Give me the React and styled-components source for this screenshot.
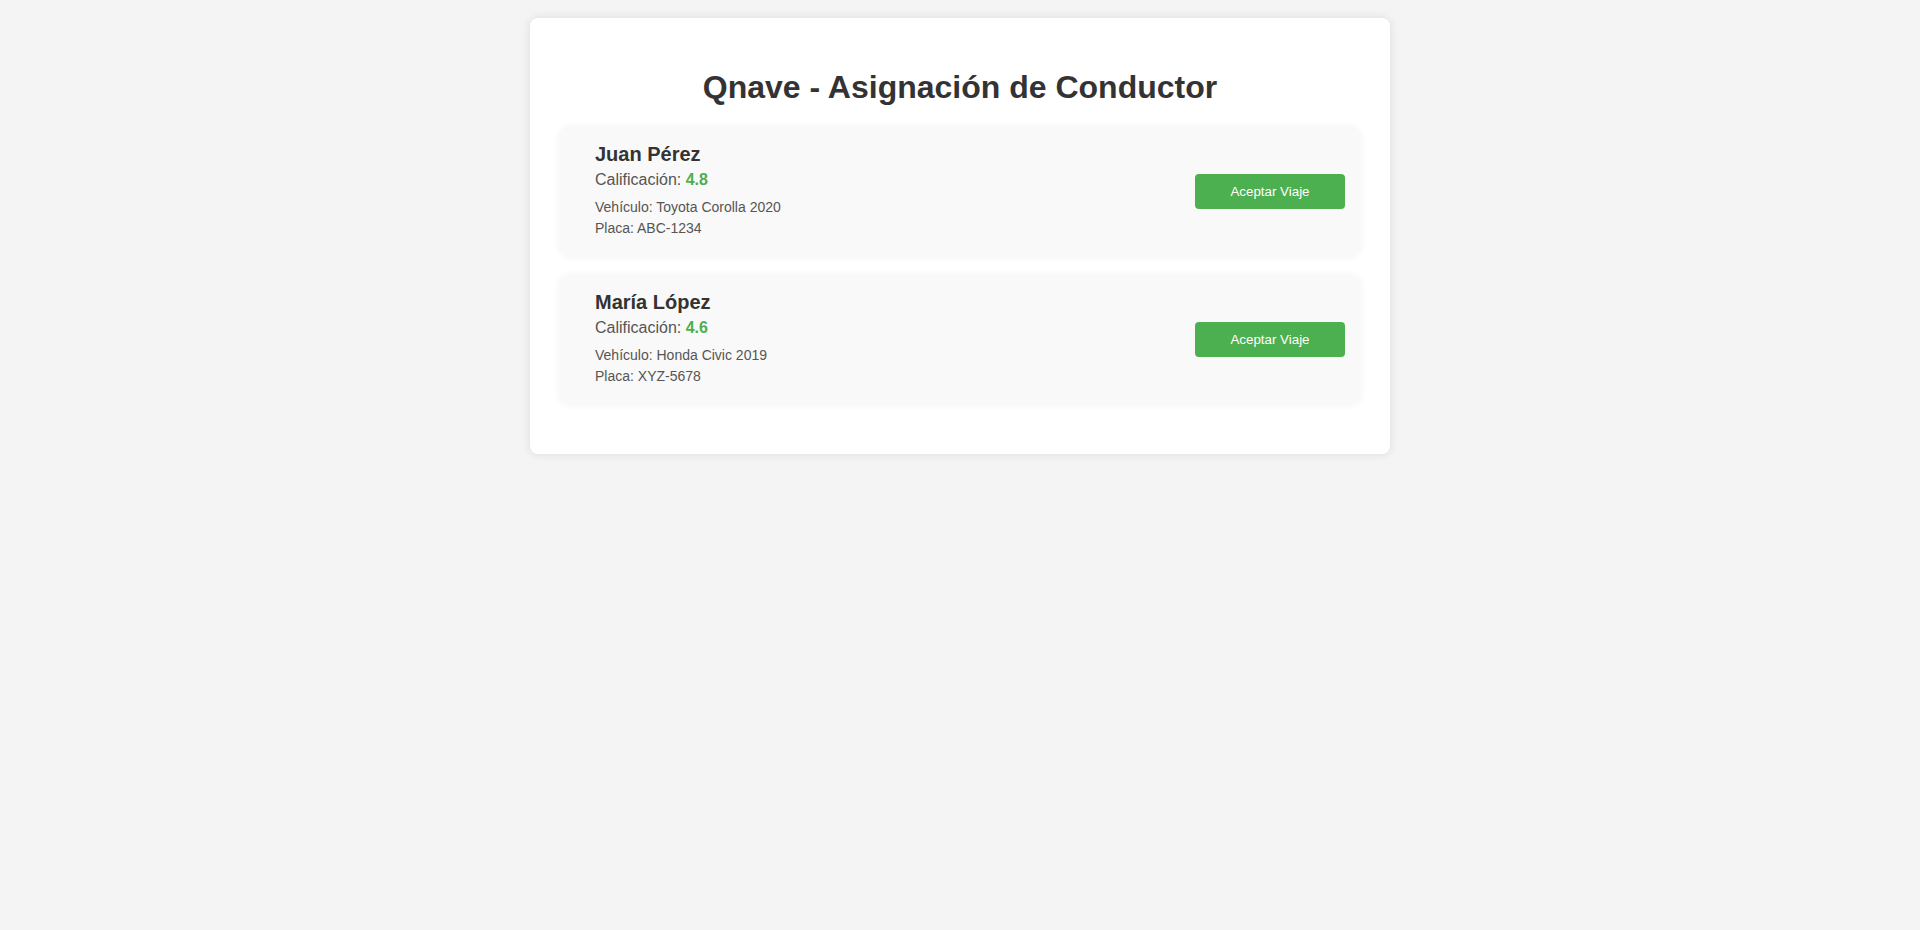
import React from 'react';
import styled, { createGlobalStyle } from 'styled-components';

const GlobalStyle = createGlobalStyle`
  body {
    margin: 0;
    padding: 18px 0;
    background: #f4f4f4;
    font-family: "Liberation Sans", Arial, sans-serif;
  }
`;

const Container = styled.div`
  max-width: 800px;
  margin: 0 auto;
  padding: 30px;
  background: #fff;
  border-radius: 8px;
  box-shadow: 0 0 10px rgba(0, 0, 0, 0.1);
`;

const Title = styled.h1`
  margin: 0.67em 0;
  font-size: 32px;
  text-align: center;
  color: #333;
`;

const Card = styled.div`
  display: flex;
  justify-content: space-between;
  align-items: center;
  margin-bottom: 20px;
  padding: 15px;
  background: #f9f9f9;
  border-radius: 8px;
  box-shadow: 0 0 8px rgba(0, 0, 0, 0.06);
`;

const Info = styled.div`
  margin-left: 20px;
`;

const Name = styled.h3`
  margin: 0 0 5px;
  font-size: 20px;
  color: #333;
`;

const Rating = styled.p`
  margin: 0 0 10px;
  font-size: 16px;
  color: #555;

  strong {
    color: #4caf50;
  }
`;

const Detail = styled.p`
  margin: 0 0 5px;
  font-size: 14px;
  color: #555;
`;

const AcceptButton = styled.button`
  width: 150px;
  padding: 10px;
  border: none;
  border-radius: 4px;
  background: #4caf50;
  color: #fff;
  font-family: "Liberation Sans", Arial, sans-serif;
  font-size: 13.33px;
  cursor: pointer;
`;

const drivers = [
  { id: 1, name: 'Juan Pérez', rating: '4.8', vehicle: 'Toyota Corolla 2020', plate: 'ABC-1234' },
  { id: 2, name: 'María López', rating: '4.6', vehicle: 'Honda Civic 2019', plate: 'XYZ-5678' },
];

export default function App() {
  return (
    <>
      <GlobalStyle />
      <Container>
        <Title>Qnave - Asignación de Conductor</Title>
        {drivers.map(({ id, name, rating, vehicle, plate }) => (
          <Card key={id}>
            <Info>
              <Name>{name}</Name>
              <Rating>
                Calificación: <strong>{rating}</strong>
              </Rating>
              <Detail>Vehículo: {vehicle}</Detail>
              <Detail>Placa: {plate}</Detail>
            </Info>
            <AcceptButton>Aceptar Viaje</AcceptButton>
          </Card>
        ))}
      </Container>
    </>
  );
}
